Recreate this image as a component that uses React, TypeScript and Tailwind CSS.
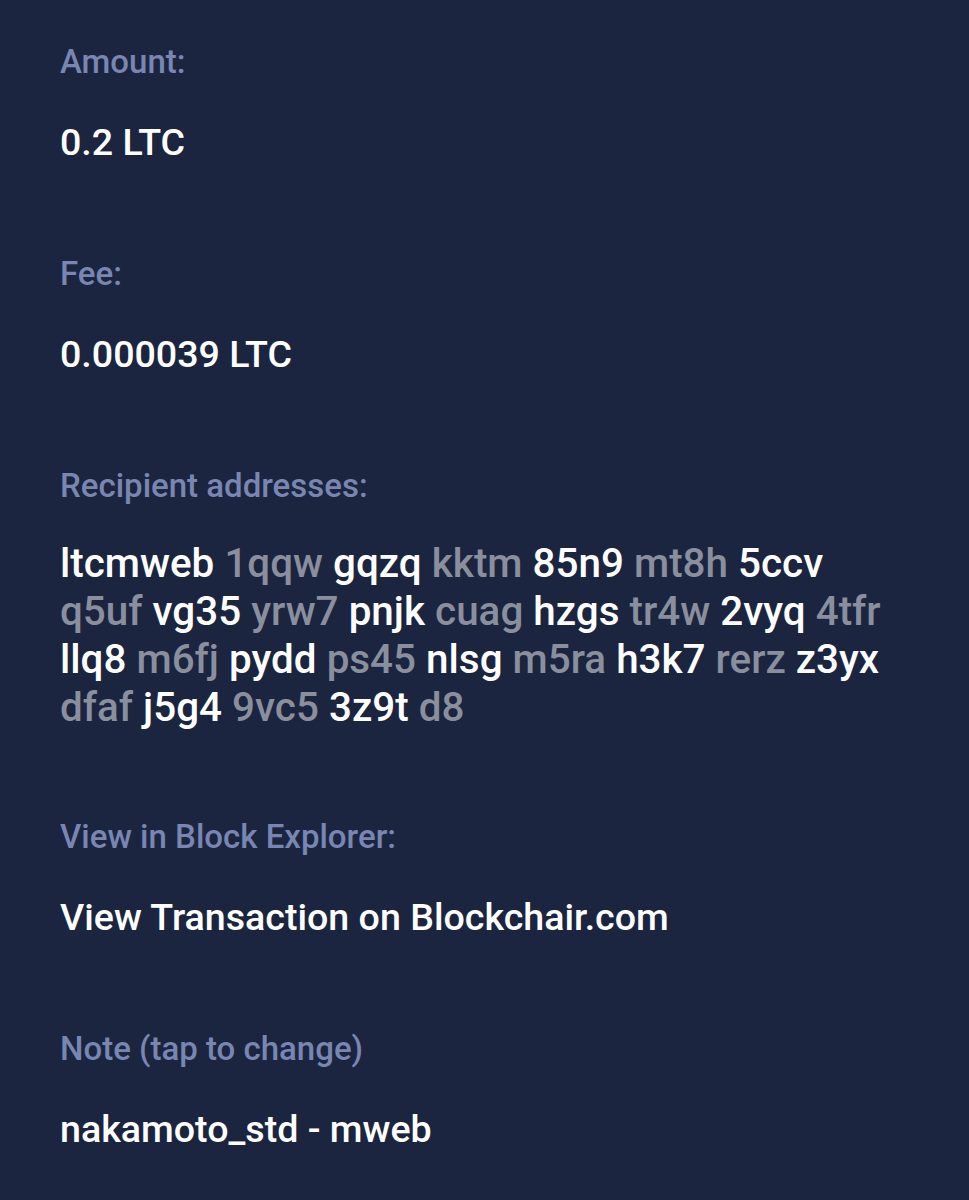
const address: string[] = [
  'ltcmweb', '1qqw', 'gqzq', 'kktm', '85n9', 'mt8h', '5ccv',
  'q5uf', 'vg35', 'yrw7', 'pnjk', 'cuag', 'hzgs', 'tr4w', '2vyq', '4tfr',
  'llq8', 'm6fj', 'pydd', 'ps45', 'nlsg', 'm5ra', 'h3k7', 'rerz', 'z3yx',
  'dfaf', 'j5g4', '9vc5', '3z9t', 'd8',
];

function Label({ children }: { children: React.ReactNode }) {
  return <div className="text-[33px] leading-[40px] font-medium text-[#7a86b2]">{children}</div>;
}

function Value({ children }: { children: React.ReactNode }) {
  return <div className="mt-[38px] text-[37.6px] leading-[44px] font-medium text-white">{children}</div>;
}

export default function App() {
  return (
    <div
      className="min-h-[1200px] w-full bg-[#1b2540] pl-[60px] pr-8 pt-[42px]"
      style={{ fontFamily: 'Roboto, "Noto Sans", sans-serif' }}
    >
      <section>
        <Label>Amount:</Label>
        <Value>0.2 LTC</Value>
      </section>

      <section className="mt-[90px]">
        <Label>Fee:</Label>
        <Value>0.000039 LTC</Value>
      </section>

      <section className="mt-[90px]">
        <Label>Recipient addresses:</Label>
        <div className="mt-[34px] max-w-[830px] text-[40.4px] leading-[48px] font-medium">
          {address.map((chunk, i) => (
            <span key={i} className={i % 2 === 0 ? 'text-white' : 'text-[#8a8f9e]'}>
              {chunk}
              {i < address.length - 1 ? ' ' : ''}
            </span>
          ))}
        </div>
      </section>

      <section className="mt-[85px]">
        <Label>View in Block Explorer:</Label>
        <Value>View Transaction on Blockchair.com</Value>
      </section>

      <section className="mt-[90px]">
        <Label>Note (tap to change)</Label>
        <Value>nakamoto_std - mweb</Value>
      </section>
    </div>
  );
}
